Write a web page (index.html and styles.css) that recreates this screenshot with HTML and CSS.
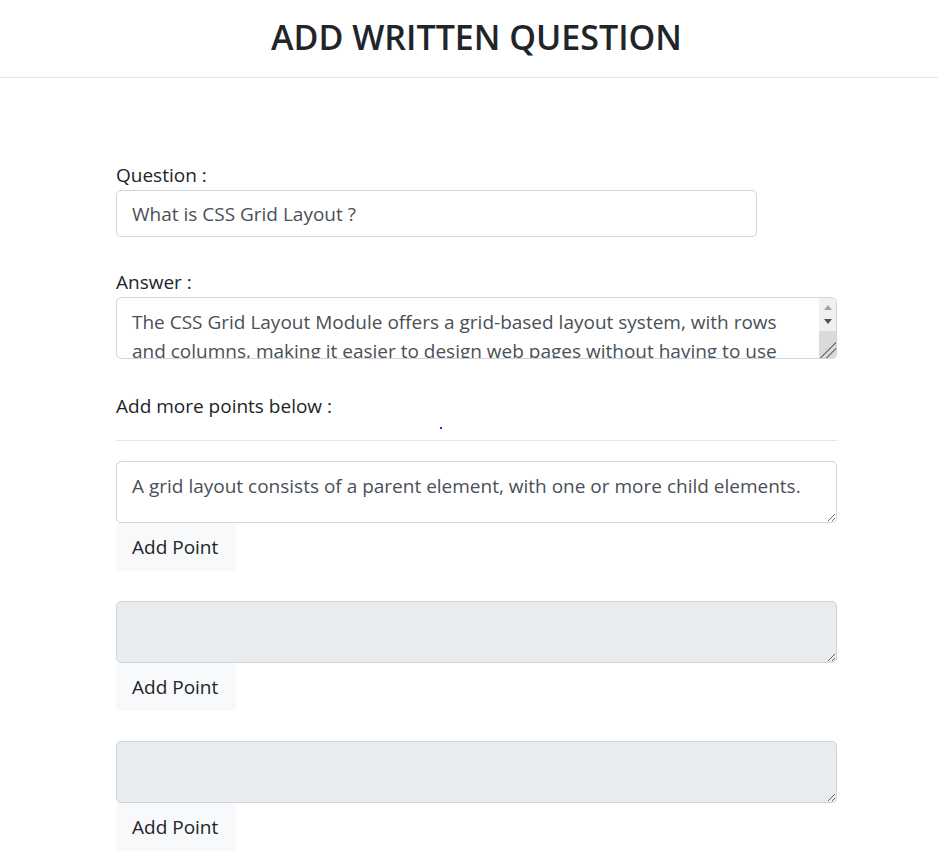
FILE: index.html
```html
<!DOCTYPE html>
<html lang="en">
<head>
<meta charset="utf-8">
<title>Add Written Question</title>
<link rel="stylesheet" href="styles.css">
</head>
<body>
<header class="page-header">
  <h1 class="page-title">ADD WRITTEN QUESTION</h1>
</header>
<main class="form-wrap">
  <div class="field">
    <label class="field-label" for="q">Question :</label>
    <input id="q" class="control control-short" type="text" value="What is CSS Grid Layout ?">
  </div>
  <div class="field">
    <label class="field-label" for="a">Answer :</label>
    <div class="answer-box">
      <textarea id="a" class="control answer-area">The CSS Grid Layout Module offers a grid-based layout system, with rows and columns, making it easier to design web pages without having to use floats and positioning.</textarea>
      <div class="fake-scroll">
        <span class="arrow arrow-up"></span>
        <span class="arrow arrow-down"></span>
        <span class="thumb"></span>
      </div>
    </div>
  </div>
  <div class="points-head">
    <span class="field-label">Add more points below :</span>
    <span class="dot"></span>
  </div>
  <hr class="divider">
  <div class="point">
    <textarea class="control point-area">A grid layout consists of a parent element, with one or more child elements.</textarea>
    <button class="btn-light" type="button">Add Point</button>
  </div>
  <div class="point">
    <textarea class="control point-area" disabled></textarea>
    <button class="btn-light" type="button">Add Point</button>
  </div>
  <div class="point">
    <textarea class="control point-area" disabled></textarea>
    <button class="btn-light" type="button">Add Point</button>
  </div>
</main>
</body>
</html>
```
FILE: styles.css
```css
* { box-sizing: border-box; }
html, body { margin: 0; padding: 0; }
body {
  font-family: "Open Sans", "Noto Sans", "Liberation Sans", sans-serif;
  color: #212529;
  background: #fff;
  overflow: hidden;
}
.page-header {
  height: 78px;
  border-bottom: 1px solid #e3e5e8;
  display: flex;
  align-items: center;
  justify-content: center;
  padding-left: 15px;
  padding-bottom: 3px;
}
.page-title {
  margin: 0;
  font-size: 34px;
  font-weight: 600;
  letter-spacing: 0;
  color: #212529;
  line-height: 1.2;
}
.form-wrap {
  width: 721px;
  margin-left: 116px;
  padding-top: 82px;
}
.field { margin-bottom: 30px; }
.field-label {
  display: block;
  font-size: 19px;
  line-height: 30px;
  margin-bottom: 0;
}
.control {
  display: block;
  width: 100%;
  font-family: inherit;
  font-size: 19px;
  line-height: 1.5;
  color: #495057;
  background: #fff;
  border: 1px solid #ced4da;
  border-radius: 5px;
  padding: 6px 15px;
  margin: 0;
  outline: none;
}
.control-short { width: 641px; height: 47px; }
.answer-box { position: relative; }
.answer-area {
  height: 62px;
  overflow: hidden;
  resize: none;
  padding-top: 10px;
  padding-right: 28px;
}
.fake-scroll {
  position: absolute;
  top: 1px;
  right: 1px;
  bottom: 1px;
  width: 17px;
  background: #f0f0f0;
  border-top-right-radius: 4px;
  border-bottom-right-radius: 4px;
  display: flex;
  flex-direction: column;
  align-items: center;
}
.arrow {
  width: 0;
  height: 0;
  border-left: 4px solid transparent;
  border-right: 4px solid transparent;
}
.arrow-up { border-bottom: 5px solid #a3a3a3; margin-top: 7px; }
.arrow-down { border-top: 5px solid #505050; margin-top: 9px; }
.thumb {
  margin-top: 7px;
  width: 17px;
  flex: 1;
  background: #dadada;
  background-image: linear-gradient(135deg, transparent 62%, #808080 62%, #808080 66%, transparent 66%, transparent 76%, #808080 76%, #808080 80%, transparent 80%);
}
.points-head {
  position: relative;
  padding-top: 2px;
}
.dot {
  position: absolute;
  left: 324px;
  top: 38px;
  width: 2px;
  height: 2px;
  background: #2a2ad0;
}
.divider {
  border: 0;
  border-top: 1px solid #e3e5e8;
  margin: 19px 0 20px;
}
.point { margin-bottom: 30px; }
.point-area {
  height: 62px;
  resize: vertical;
  padding-top: 10px;
}
.point-area:disabled { background: #e9ecef; }
.btn-light {
  display: block;
  font-family: inherit;
  font-size: 19px;
  line-height: 1.5;
  color: #212529;
  background: #f8f9fa;
  border: 1px solid #f8f9fa;
  border-radius: 5px;
  padding: 8px 15px;
  height: 48px;
  width: 120px;
  margin-top: 0;
  text-align: left;
  white-space: nowrap;
}
```
